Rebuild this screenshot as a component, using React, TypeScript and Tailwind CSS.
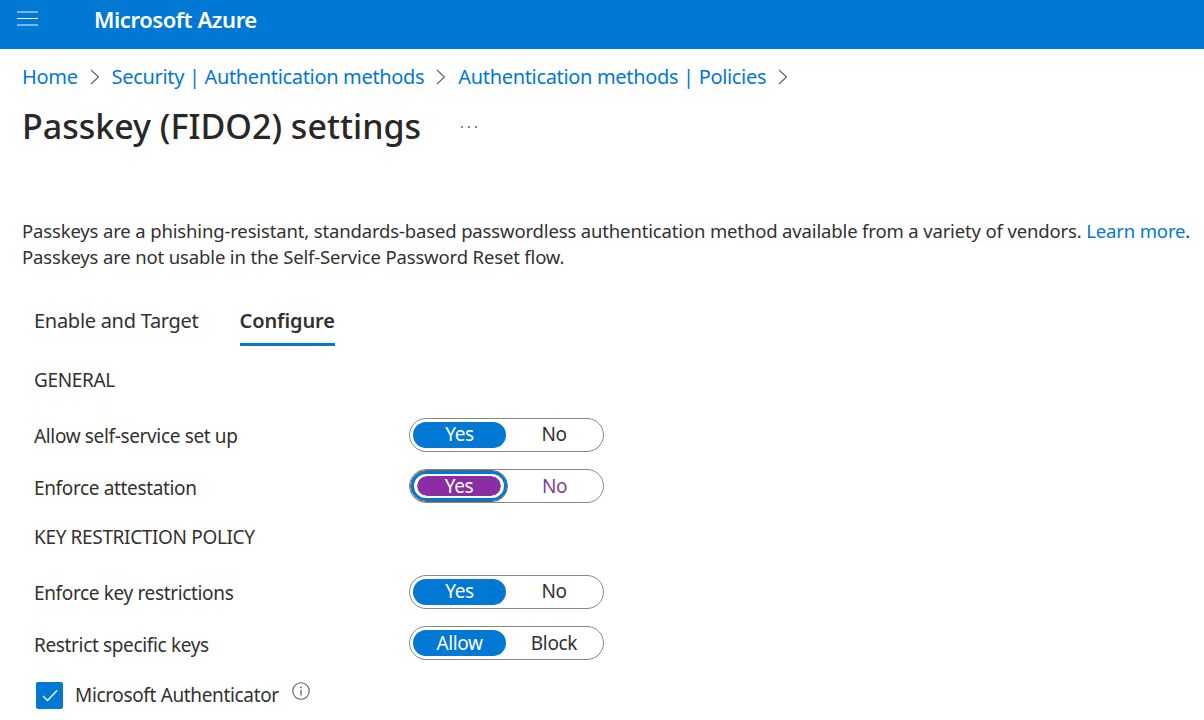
import React from "react";

function Toggle({ on, off, focus, low }: { on: string; off: string; focus?: boolean; low?: boolean }) {
  return (
    <div className="flex h-[34px] w-[195px] items-center rounded-full border border-[#8a8886] bg-white p-[3px] text-[19px] leading-none">
      {focus ? (
        <div className="flex h-[30px] w-[96px] -ml-[2px] items-center justify-center rounded-full border-[3px] border-[#0078d4] outline outline-1 outline-[#605e5c]">
          <div className="flex h-[20px] w-[84px] items-center justify-center rounded-full bg-[#8b2da3] text-white outline outline-1 outline-white">{on}</div>
        </div>
      ) : (
        <div className={`flex h-[26px] w-[93px] items-center justify-center rounded-full bg-[#0078d4] text-white ${low ? "" : "pb-[2px]"}`}>{on}</div>
      )}
      <div className={`flex-1 pl-[2px] text-center ${focus ? "text-[#7f3f98]" : low ? "text-[#323130]" : "pb-[2px] text-[#323130]"}`}>{off}</div>
    </div>
  );
}

function Row({ label, className, low, children }: { label: string; className: string; low?: boolean; children: React.ReactNode }) {
  return (
    <div className={`flex items-center ${className}`}>
      <div className={`w-[375px] ${low ? "pt-[5px]" : "pt-[3px]"}`}>{label}</div>
      {children}
    </div>
  );
}

function Chevron() {
  return (
    <svg width="10" height="16" viewBox="0 0 10 16" fill="none" className="mx-[12px] shrink-0">
      <path d="M1 1l7.5 7L1 15" stroke="#605e5c" strokeWidth="1.1" />
    </svg>
  );
}

export default function App() {
  return (
    <div className="h-[720px] w-[1204px] overflow-hidden bg-white font-['Noto_Sans','Open_Sans',sans-serif] text-[19px] text-[#323130] tracking-[-0.35px]">
      <header className="flex h-[49px] items-start bg-[#0078d4] text-white">
        <svg width="22" height="16" viewBox="0 0 22 16" className="ml-[17px] mt-[11px]" stroke="#f0f6fc" strokeWidth="1.2">
          <path d="M0 1h21M0 7.5h21M0 14h21" />
        </svg>
        <div className="ml-[55px] mt-[4px] text-[22px] font-semibold leading-[30px] tracking-[-0.42px]">Microsoft Azure</div>
      </header>

      <nav className="flex h-[28px] items-center pl-[22px] mt-[14px] text-[20px] tracking-[-0.33px] text-[#0078d4]">
        <span>Home</span>
        <Chevron />
        <span>Security | Authentication methods</span>
        <Chevron />
        <span>Authentication methods | Policies</span>
        <Chevron />
      </nav>

      <div className="ml-[22px] mt-[13px] flex h-[44px] items-center">
        <h1 className="text-[34px] font-medium leading-[44px] text-[#292827] tracking-normal">Passkey (FIDO2) settings</h1>
        <svg width="18" height="4" viewBox="0 0 18 4" className="ml-[39px] mt-[1px]" fill="#605e5c">
          <circle cx="2" cy="2" r="1" /><circle cx="9" cy="2" r="1" /><circle cx="16" cy="2" r="1" />
        </svg>
      </div>

      <div className="ml-[22px] mt-[70px] w-[1180px] text-[18.5px] leading-[26px] tracking-[-0.15px] whitespace-nowrap">
        <p>
          Passkeys are a phishing-resistant, standards-based passwordless authentication method available from a variety of vendors.{" "}
          <span className="text-[#0078d4]">Learn more</span>.
        </p>
        <p>Passkeys are not usable in the Self-Service Password Reset flow.</p>
      </div>

      <div className="ml-[34px] mt-[35px]">
        <div className="flex h-[41px] items-start text-[20px]">
          <div className="mr-[41px] pt-[3px] leading-[26px] tracking-[-0.28px]">Enable and Target</div>
          <div className="h-[41px] border-b-[3px] border-[#0078d4] pt-[3px] font-semibold leading-[26px] tracking-[-0.1px]">Configure</div>
        </div>
        <div className="mt-[21px] leading-[26px]">GENERAL</div>
        <Row label="Allow self-service set up" className="mt-[25px]"><Toggle on="Yes" off="No" /></Row>
        <Row label="Enforce attestation" className="mt-[17px]" low><Toggle on="Yes" off="No" focus /></Row>
        <div className="mt-[21px] leading-[26px]">KEY RESTRICTION POLICY</div>
        <Row label="Enforce key restrictions" className="mt-[25px]"><Toggle on="Yes" off="No" /></Row>
        <Row label="Restrict specific keys" className="mt-[17px]" low><Toggle on="Allow" off="Block" low /></Row>
        <div className="mt-[21px] flex items-center">
          <div className="ml-[2px] flex h-[27px] w-[27px] items-center justify-center rounded-[2px] bg-[#0078d4]">
            <svg width="16" height="13" viewBox="0 0 16 13" fill="none"><path d="M1 7l4.5 4.5L15 1.5" stroke="white" strokeWidth="1.3" /></svg>
          </div>
          <span className="ml-[12px]">Microsoft Authenticator</span>
          <svg width="18" height="18" viewBox="0 0 18 18" fill="none" className="ml-[13px] -mt-[8px]">
            <circle cx="9" cy="9" r="8.2" stroke="#605e5c" strokeWidth="1.1" />
            <path d="M9 8v5.5" stroke="#605e5c" strokeWidth="1.3" />
            <circle cx="9" cy="5.4" r="0.9" fill="#605e5c" />
          </svg>
        </div>
      </div>
    </div>
  );
}
